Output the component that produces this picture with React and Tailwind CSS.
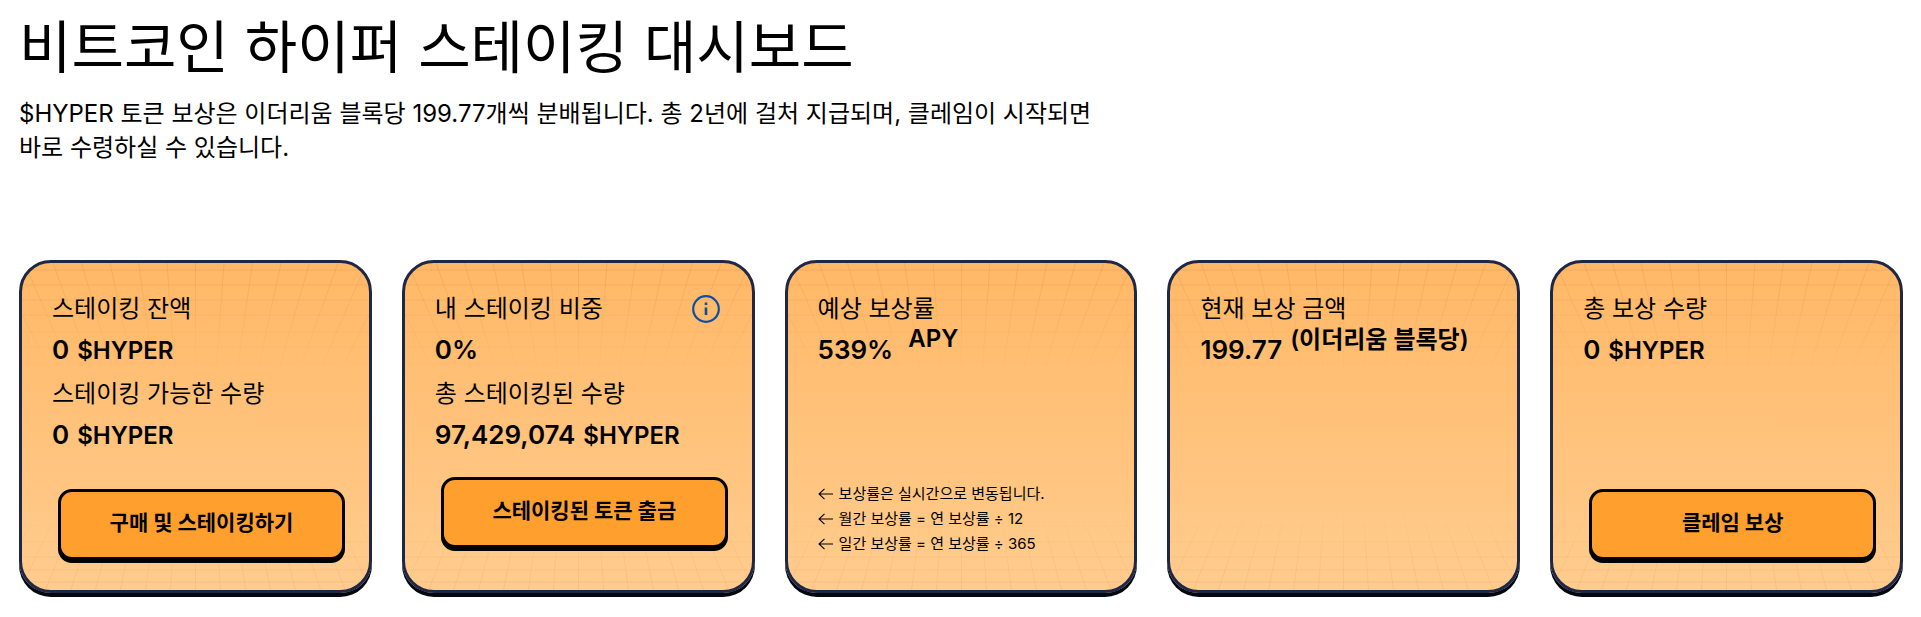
const W = 347;
const H = 327;

const Grid = () => {
    const lines = [];
    // lines run toward a vanishing point below (top half) or above (bottom half) the card
    for (let i = -12; i <= 12; i++) {
        const cx = W / 2;
        const topX = cx + i * 28.5;
        const botX = cx + i * 25;
        lines.push(<line key={'t' + i} x1={topX} y1={0} x2={cx + i * 28.5 * 0.62} y2={150}/>);
        lines.push(<line key={'b' + i} x1={botX} y1={H} x2={cx + i * 25 * 0.68} y2={H - 120}/>);
    }
    [7, 22, 37, 52, 69, 84, 100, 116].forEach((y) => {
        lines.push(<line key={'ht' + y} x1={0} y1={y} x2={W} y2={y}/>);
    });
    [8, 20, 33, 48, 64, 82].forEach((y) => {
        lines.push(<line key={'hb' + y} x1={0} y1={H - y} x2={W} y2={H - y}/>);
    });
    return (
        <svg className="absolute left-0 top-0" width={W} height={H} fill="none" stroke="url(#gridFade)" strokeWidth="1">
            <defs>
                <linearGradient id="gridFade" gradientUnits="userSpaceOnUse" x1="0" y1="0" x2="0" y2={H}>
                    <stop offset="0" stopColor="#d9863a" stopOpacity="0.28"/>
                    <stop offset="0.36" stopColor="#d9863a" stopOpacity="0"/>
                    <stop offset="0.74" stopColor="#d9863a" stopOpacity="0"/>
                    <stop offset="1" stopColor="#d9863a" stopOpacity="0.18"/>
                </linearGradient>
            </defs>
            {lines}
        </svg>
    );
};

const ActionButton = ({children}) => (
    <button className="mb-[1px] ml-[6px] flex h-[71px] w-[287px] items-center justify-center rounded-[14px] border-[3px] border-black bg-[#ffa02e] pb-[3px] text-[21px] font-bold text-black shadow-[0_3px_0_0_#000]">
        {children}
    </button>
);

const Label = ({children}) => (
    <div className="text-[24px] leading-[36px] text-black">{children}</div>
);

const Value = ({children, unit}) => (
    <div className="mt-[5px] text-[26px] font-semibold leading-[36px] text-black">
        {children}<span className="ml-[8px] text-[24px]">{unit}</span>
    </div>
);

const Card = ({children}) => (
    <div className="min-w-0 flex-1 rounded-[32px] shadow-[0_4px_0_0_#05070f]">
        <div className="relative h-[333px] overflow-hidden rounded-[32px] border-[3px] border-[#1e2745] bg-gradient-to-b from-[#ffb866] to-[#ffcc8e]">
            <Grid/>
            <div className="relative flex h-full flex-col pb-[29px] pl-[30px] pr-[30px] pt-[28px]">{children}</div>
        </div>
    </div>
);

const Note = ({children}) => (
    <div className="flex items-center">
        <svg className="mr-[6px] h-[12px] w-[15px]" viewBox="0 0 15 12" fill="none" stroke="#000" strokeWidth="1.1">
            <path d="M15 6H1M6.5 .8 1 6l5.5 5.2"/>
        </svg>
        {children}
    </div>
);

export default function App() {
    return (
        <div className="min-h-[617px] bg-white pl-[19px] pr-[18px] pt-[12px] font-['Inter','Noto_Sans_CJK_KR',sans-serif] text-black">
            <h1 className="text-[57px] font-normal leading-[72px]">비트코인 하이퍼 스테이킹 대시보드</h1>
            <p className="mt-[13px] w-[1100px] text-[24px] leading-[34px]">
                $HYPER 토큰 보상은 이더리움 블록당 199.77개씩 분배됩니다. 총 2년에 걸처 지급되며, 클레임이 시작되면 바로 수령하실 수 있습니다.
            </p>
            <div className="mt-[95px] flex gap-[30px]">
                <Card>
                    <Label>스테이킹 잔액</Label>
                    <Value unit="$HYPER">0</Value>
                    <div className="mt-[7px]"><Label>스테이킹 가능한 수량</Label></div>
                    <Value unit="$HYPER">0</Value>
                    <div className="mt-auto"><ActionButton>구매 및 스테이킹하기</ActionButton></div>
                </Card>
                <Card>
                    <div className="flex items-center justify-between">
                        <Label>내 스테이킹 비중</Label>
                        <svg className="mr-[2px] h-[28px] w-[28px]" viewBox="0 0 28 28" fill="none" stroke="#0b4ea2" strokeWidth="2.2">
                            <circle cx="14" cy="14" r="12.8"/>
                            <path d="M14 12.5V20" strokeWidth="2.6"/>
                            <path d="M14 7.6V10" strokeWidth="2.6"/>
                        </svg>
                    </div>
                    <Value>0%</Value>
                    <div className="mt-[7px]"><Label>총 스테이킹된 수량</Label></div>
                    <Value unit="$HYPER">97,429,074</Value>
                    <div className="mb-[12px] mt-auto"><ActionButton>스테이킹된 토큰 출금</ActionButton></div>
                </Card>
                <Card>
                    <Label>예상 보상률</Label>
                    <div className="mt-[5px] flex items-start text-[26px] font-semibold leading-[36px]">
                        539%<span className="ml-[15px] mt-[-11px] text-[24px]">APY</span>
                    </div>
                    <div className="mb-[5px] mt-auto text-[15px] leading-[25px]">
                        <Note>보상률은 실시간으로 변동됩니다.</Note>
                        <Note>월간 보상률 = 연 보상률 ÷ 12</Note>
                        <Note>일간 보상률 = 연 보상률 ÷ 365</Note>
                    </div>
                </Card>
                <Card>
                    <Label>현재 보상 금액</Label>
                    <div className="mt-[5px] flex items-start text-[26px] font-semibold leading-[36px]">
                        199.77<span className="ml-[8px] mt-[-10px] text-[24px]">(이더리움 블록당)</span>
                    </div>
                </Card>
                <Card>
                    <Label>총 보상 수량</Label>
                    <Value unit="$HYPER">0</Value>
                    <div className="mt-auto"><ActionButton>클레임 보상</ActionButton></div>
                </Card>
            </div>
        </div>
    );
}
